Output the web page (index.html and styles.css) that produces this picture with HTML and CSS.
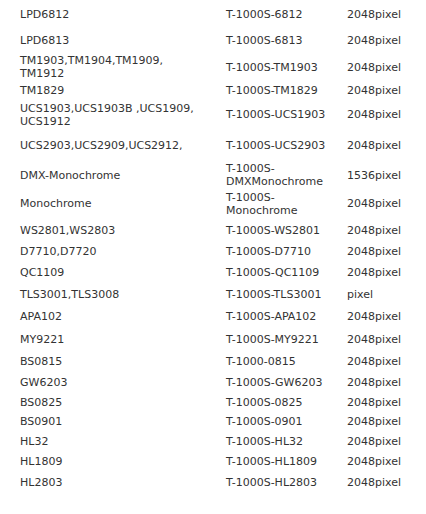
FILE: index.html
```html
<!DOCTYPE html>
<html>
<head>
<meta charset="utf-8">
<link rel="stylesheet" href="styles.css">
</head>
<body>
<table class="chips">
  <tr class="r26"><td class="c1">LPD6812</td><td class="c2">T-1000S-6812</td><td class="c3">2048pixel</td></tr>
  <tr class="r26"><td class="c1">LPD6813</td><td class="c2">T-1000S-6813</td><td class="c3">2048pixel</td></tr>
  <tr class="r28"><td class="c1">TM1903,TM1904,TM1909,<br>TM1912</td><td class="c2">T-1000S-TM1903</td><td class="c3">2048pixel</td></tr>
  <tr class="r19"><td class="c1">TM1829</td><td class="c2">T-1000S-TM1829</td><td class="c3">2048pixel</td></tr>
  <tr class="r29"><td class="c1">UCS1903,UCS1903B ,UCS1909,<br>UCS1912</td><td class="c2">T-1000S-UCS1903</td><td class="c3">2048pixel</td></tr>
  <tr class="r32"><td class="c1">UCS2903,UCS2909,UCS2912,</td><td class="c2">T-1000S-UCS2903</td><td class="c3">2048pixel</td></tr>
  <tr class="r28"><td class="c1">DMX-Monochrome</td><td class="c2">T-1000S-<br>DMXMonochrome</td><td class="c3">1536pixel</td></tr>
  <tr class="r29"><td class="c1">Monochrome</td><td class="c2">T-1000S-<br>Monochrome</td><td class="c3">2048pixel</td></tr>
  <tr class="r24"><td class="c1">WS2801,WS2803</td><td class="c2">T-1000S-WS2801</td><td class="c3">2048pixel</td></tr>
  <tr class="r19"><td class="c1">D7710,D7720</td><td class="c2">T-1000S-D7710</td><td class="c3">2048pixel</td></tr>
  <tr class="r22"><td class="c1">QC1109</td><td class="c2">T-1000S-QC1109</td><td class="c3">2048pixel</td></tr>
  <tr class="r22"><td class="c1">TLS3001,TLS3008</td><td class="c2">T-1000S-TLS3001</td><td class="c3">pixel</td></tr>
  <tr class="r23"><td class="c1">APA102</td><td class="c2">T-1000S-APA102</td><td class="c3">2048pixel</td></tr>
  <tr class="r22"><td class="c1">MY9221</td><td class="c2">T-1000S-MY9221</td><td class="c3">2048pixel</td></tr>
  <tr class="r22"><td class="c1">BS0815</td><td class="c2">T-1000-0815</td><td class="c3">2048pixel</td></tr>
  <tr class="r21"><td class="c1">GW6203</td><td class="c2">T-1000S-GW6203</td><td class="c3">2048pixel</td></tr>
  <tr class="r18"><td class="c1">BS0825</td><td class="c2">T-1000S-0825</td><td class="c3">2048pixel</td></tr>
  <tr class="r20"><td class="c1">BS0901</td><td class="c2">T-1000S-0901</td><td class="c3">2048pixel</td></tr>
  <tr class="r20"><td class="c1">HL32</td><td class="c2">T-1000S-HL32</td><td class="c3">2048pixel</td></tr>
  <tr class="r20"><td class="c1">HL1809</td><td class="c2">T-1000S-HL1809</td><td class="c3">2048pixel</td></tr>
  <tr class="r22"><td class="c1">HL2803</td><td class="c2">T-1000S-HL2803</td><td class="c3">2048pixel</td></tr>
</table>
</body>
</html>
```

FILE: styles.css
```css
html, body {
  margin: 0;
  padding: 0;
  background: #ffffff;
}

.chips {
  border-collapse: collapse;
  border-spacing: 0;
  margin: 1px 0 0 20px;
  font-family: "DejaVu Sans", Verdana, sans-serif;
  font-size: 11px;
  line-height: 13px;
  color: #333333;
}

.chips td {
  padding: 0;
  vertical-align: middle;
  white-space: nowrap;
}

.c1 { width: 206px; }
.c2 { width: 121px; }
.c3 { width: 70px; }

.r18 { height: 18px; }
.r19 { height: 19px; }
.r20 { height: 20px; }
.r21 { height: 21px; }
.r22 { height: 22px; }
.r23 { height: 23px; }
.r24 { height: 24px; }
.r26 { height: 26px; }
.r28 { height: 28px; }
.r29 { height: 29px; }
.r32 { height: 32px; }
```
